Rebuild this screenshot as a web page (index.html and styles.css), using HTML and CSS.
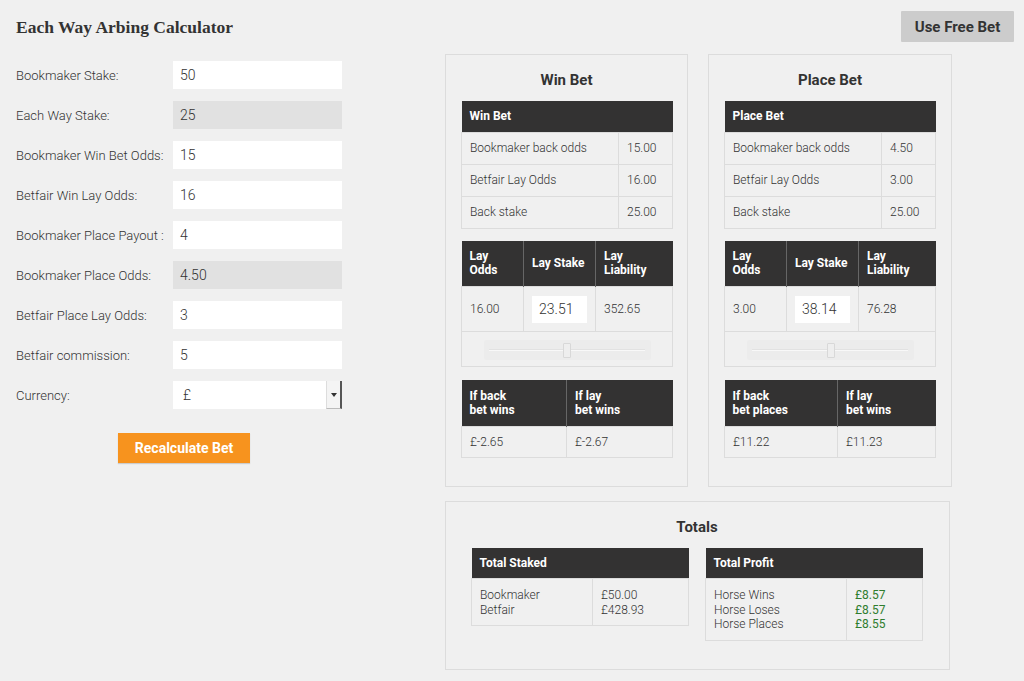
FILE: index.html
```html
<!DOCTYPE html>
<html lang="en">
<head>
<meta charset="utf-8">
<title>Each Way Arbing Calculator</title>
<link rel="stylesheet" href="styles.css">
</head>
<body>
<div class="page">
  <header class="topbar">
    <h1 class="title">Each Way Arbing Calculator</h1>
    <button class="free-bet">Use Free Bet</button>
  </header>
  <main class="main">
    <section class="form">
      <div class="row"><label>Bookmaker Stake:</label><div class="field">50</div></div>
      <div class="row"><label>Each Way Stake:</label><div class="field ro">25</div></div>
      <div class="row"><label>Bookmaker Win Bet Odds:</label><div class="field">15</div></div>
      <div class="row"><label>Betfair Win Lay Odds:</label><div class="field">16</div></div>
      <div class="row"><label>Bookmaker Place Payout :</label><div class="field">4</div></div>
      <div class="row"><label>Bookmaker Place Odds:</label><div class="field ro">4.50</div></div>
      <div class="row"><label>Betfair Place Lay Odds:</label><div class="field">3</div></div>
      <div class="row"><label>Betfair commission:</label><div class="field">5</div></div>
      <div class="row"><label>Currency:</label><div class="select"><span class="sel-val">£</span><span class="sel-btn"><svg width="6" height="4" viewBox="0 0 6 4"><path d="M0 0H6L3 4Z" fill="#333"/></svg></span></div></div>
      <div class="btn-row"><button class="recalc">Recalculate Bet</button></div>
    </section>

    <section class="results">
      <div class="bets">
        <div class="panel win">
          <h2>Win Bet</h2>
          <table class="t t1">
            <colgroup><col class="c157"><col></colgroup>
            <tr class="hd1"><th colspan="2">Win Bet</th></tr>
            <tr><td>Bookmaker back odds</td><td>15.00</td></tr>
            <tr><td>Betfair Lay Odds</td><td>16.00</td></tr>
            <tr><td>Back stake</td><td>25.00</td></tr>
          </table>
          <table class="t t2">
            <colgroup><col class="c62"><col class="c72"><col></colgroup>
            <tr class="hd2"><th>Lay<br>Odds</th><th>Lay Stake</th><th>Lay<br>Liability</th></tr>
            <tr class="rowin"><td>16.00</td><td><span class="stake">23.51</span></td><td>352.65</td></tr>
            <tr class="rowslide"><td colspan="3"><div class="slider"><div class="track"></div><div class="handle h-win"></div></div></td></tr>
          </table>
          <table class="t t3">
            <colgroup><col class="c105"><col></colgroup>
            <tr class="hd2"><th>If back<br>bet wins</th><th>If lay<br>bet wins</th></tr>
            <tr><td>£-2.65</td><td>£-2.67</td></tr>
          </table>
        </div>

        <div class="panel place">
          <h2>Place Bet</h2>
          <table class="t t1">
            <colgroup><col class="c157"><col></colgroup>
            <tr class="hd1"><th colspan="2">Place Bet</th></tr>
            <tr><td>Bookmaker back odds</td><td>4.50</td></tr>
            <tr><td>Betfair Lay Odds</td><td>3.00</td></tr>
            <tr><td>Back stake</td><td>25.00</td></tr>
          </table>
          <table class="t t2">
            <colgroup><col class="c62"><col class="c72"><col></colgroup>
            <tr class="hd2"><th>Lay<br>Odds</th><th>Lay Stake</th><th>Lay<br>Liability</th></tr>
            <tr class="rowin"><td>3.00</td><td><span class="stake">38.14</span></td><td>76.28</td></tr>
            <tr class="rowslide"><td colspan="3"><div class="slider"><div class="track"></div><div class="handle h-place"></div></div></td></tr>
          </table>
          <table class="t t3">
            <colgroup><col class="c113"><col></colgroup>
            <tr class="hd2"><th>If back<br>bet places</th><th>If lay<br>bet wins</th></tr>
            <tr><td>£11.22</td><td>£11.23</td></tr>
          </table>
        </div>
      </div>

      <div class="panel totals">
        <h2>Totals</h2>
        <div class="tot-tables">
          <table class="t tt">
            <colgroup><col class="c121"><col></colgroup>
            <tr class="hd1"><th colspan="2">Total Staked</th></tr>
            <tr class="multi"><td>Bookmaker<br>Betfair</td><td>£50.00<br>£428.93</td></tr>
          </table>
          <table class="t tt">
            <colgroup><col class="c141"><col></colgroup>
            <tr class="hd1"><th colspan="2">Total Profit</th></tr>
            <tr class="multi"><td>Horse Wins<br>Horse Loses<br>Horse Places</td><td class="green">£8.57<br>£8.57<br>£8.55</td></tr>
          </table>
        </div>
      </div>
    </section>
  </main>
</div>
</body>
</html>
```

FILE: styles.css
```css
* { box-sizing: border-box; }
html, body { margin: 0; padding: 0; }
body {
  background: #f0f0f0;
  font-family: Roboto, "Liberation Sans", Arial, sans-serif;
  color: #444;
  width: 1024px;
  height: 681px;
  overflow: hidden;
}
.page { padding: 11px 10px 0 16px; }
.topbar {
  display: flex;
  justify-content: space-between;
  align-items: flex-start;
  height: 43px;
}
.title {
  margin: 6px 0 0 0;
  font-family: "Liberation Serif", "DejaVu Serif", serif;
  font-weight: bold;
  font-size: 17.5px;
  line-height: 20px;
  color: #333;
}
.free-bet {
  width: 113px;
  height: 31px;
  border: 0;
  background: #cccccc;
  color: #333;
  font-family: Roboto, sans-serif;
  font-weight: bold;
  font-size: 15px;
  padding: 0;
  border-radius: 1px;
}
.main { display: flex; }
.form {
  width: 326px;
  padding-top: 7px;
}
.row {
  display: flex;
  align-items: center;
  height: 28px;
  margin-bottom: 12px;
}
.row label {
  width: 157px;
  font-size: 13px;
  font-weight: 300;
  color: #333;
}
.field {
  width: 169px;
  height: 28px;
  background: #fff;
  font-size: 14px;
  font-weight: 300;
  line-height: 28px;
  padding-left: 7px;
  color: #333;
}
.field.ro { background: #e1e1e1; }
.select {
  width: 169px;
  height: 28px;
  display: flex;
  font-size: 14px;
  font-weight: 300;
  line-height: 28px;
  color: #333;
}
.sel-val {
  flex: 1;
  background: #fff;
  padding-left: 10px;
}
.sel-btn {
  width: 16px;
  display: flex;
  align-items: center;
  justify-content: center;
  background: #f4f4f4;
  border-right: 2px solid #555;
  border-bottom: 1px solid #bbb;
  border-left: 1px solid #ddd;
}
.btn-row {
  padding-left: 102px;
  padding-top: 12px;
}
.recalc {
  width: 132px;
  height: 30px;
  border: 0;
  background: #f7931e;
  color: #fff;
  font-family: Roboto, sans-serif;
  font-weight: bold;
  font-size: 14px;
  padding: 0;
  box-shadow: 0 1px 1px rgba(0,0,0,0.15);
}
.results {
  margin-left: 103px;
  display: flex;
  flex-direction: column;
  gap: 14px;
}
.bets { display: flex; gap: 20px; }
.panel {
  border: 1px solid #dcdcdc;
  padding: 15px 15px 28px 15px;
}
.panel.win { width: 243px; }
.panel.place { width: 244px; }
.panel h2 {
  margin: 0 0 11px 0;
  text-align: center;
  font-size: 15px;
  line-height: 20px;
  font-weight: bold;
  color: #333;
}
.t {
  width: 212px;
  border-collapse: collapse;
  table-layout: fixed;
  font-size: 12px;
  font-weight: 300;
  color: #333;
}
.t2 { margin-top: 12px; }
.t3 { margin-top: 13px; }
.t th {
  background: #333232;
  color: #fff;
  font-weight: bold;
  text-align: left;
  font-size: 12px;
  line-height: 14px;
  padding: 0 8px;
  border-left: 1px solid #666;
}
.t th:first-child { border-left: 0; }
.t td {
  border: 1px solid #dcdcdc;
  padding: 0 8px;
  height: 32px;
}
.hd1 th { height: 31px; }
.hd2 th { height: 46px; }
.c157 { width: 157px; }
.c62 { width: 62px; }
.c72 { width: 72px; }
.c105 { width: 105px; }
.c113 { width: 113px; }
.c121 { width: 121px; }
.c141 { width: 141px; }
.rowin td { height: 45px; }
.stake {
  display: block;
  width: 55px;
  height: 27px;
  background: #fff;
  font-size: 14px;
  line-height: 27px;
  padding-left: 7px;
  color: #333;
}
.rowslide td { height: 35px; padding: 0; }
.slider {
  position: relative;
  margin: 2px auto 0;
  width: 167px;
  height: 20px;
  background: #ececec;
  border-radius: 2px;
}
.track {
  position: absolute;
  left: 5px;
  right: 6px;
  top: 9px;
  height: 2px;
  background: #e2e2e2;
  border-bottom: 1px solid #f8f8f8;
}
.handle {
  position: absolute;
  top: 3px;
  width: 8px;
  height: 15px;
  background: #eeeeee;
  border: 1px solid #d8d8d8;
  border-radius: 1px;
}
.h-win { left: 79px; }
.h-place { left: 80px; }
.t3 td { height: 31px; }
.totals {
  width: 505px;
  padding: 15px 26px 28px 25px;
}
.totals h2 { margin-bottom: 11px; }
.tot-tables { display: flex; gap: 16px; align-items: flex-start; }
.tt { width: 218px; }
.multi td {
  height: auto;
  vertical-align: top;
  line-height: 14.5px;
  padding: 9px 8px 8px 8px;
  font-size: 12px;
}
.green { color: #2e7d2e; font-weight: 400; }
```
